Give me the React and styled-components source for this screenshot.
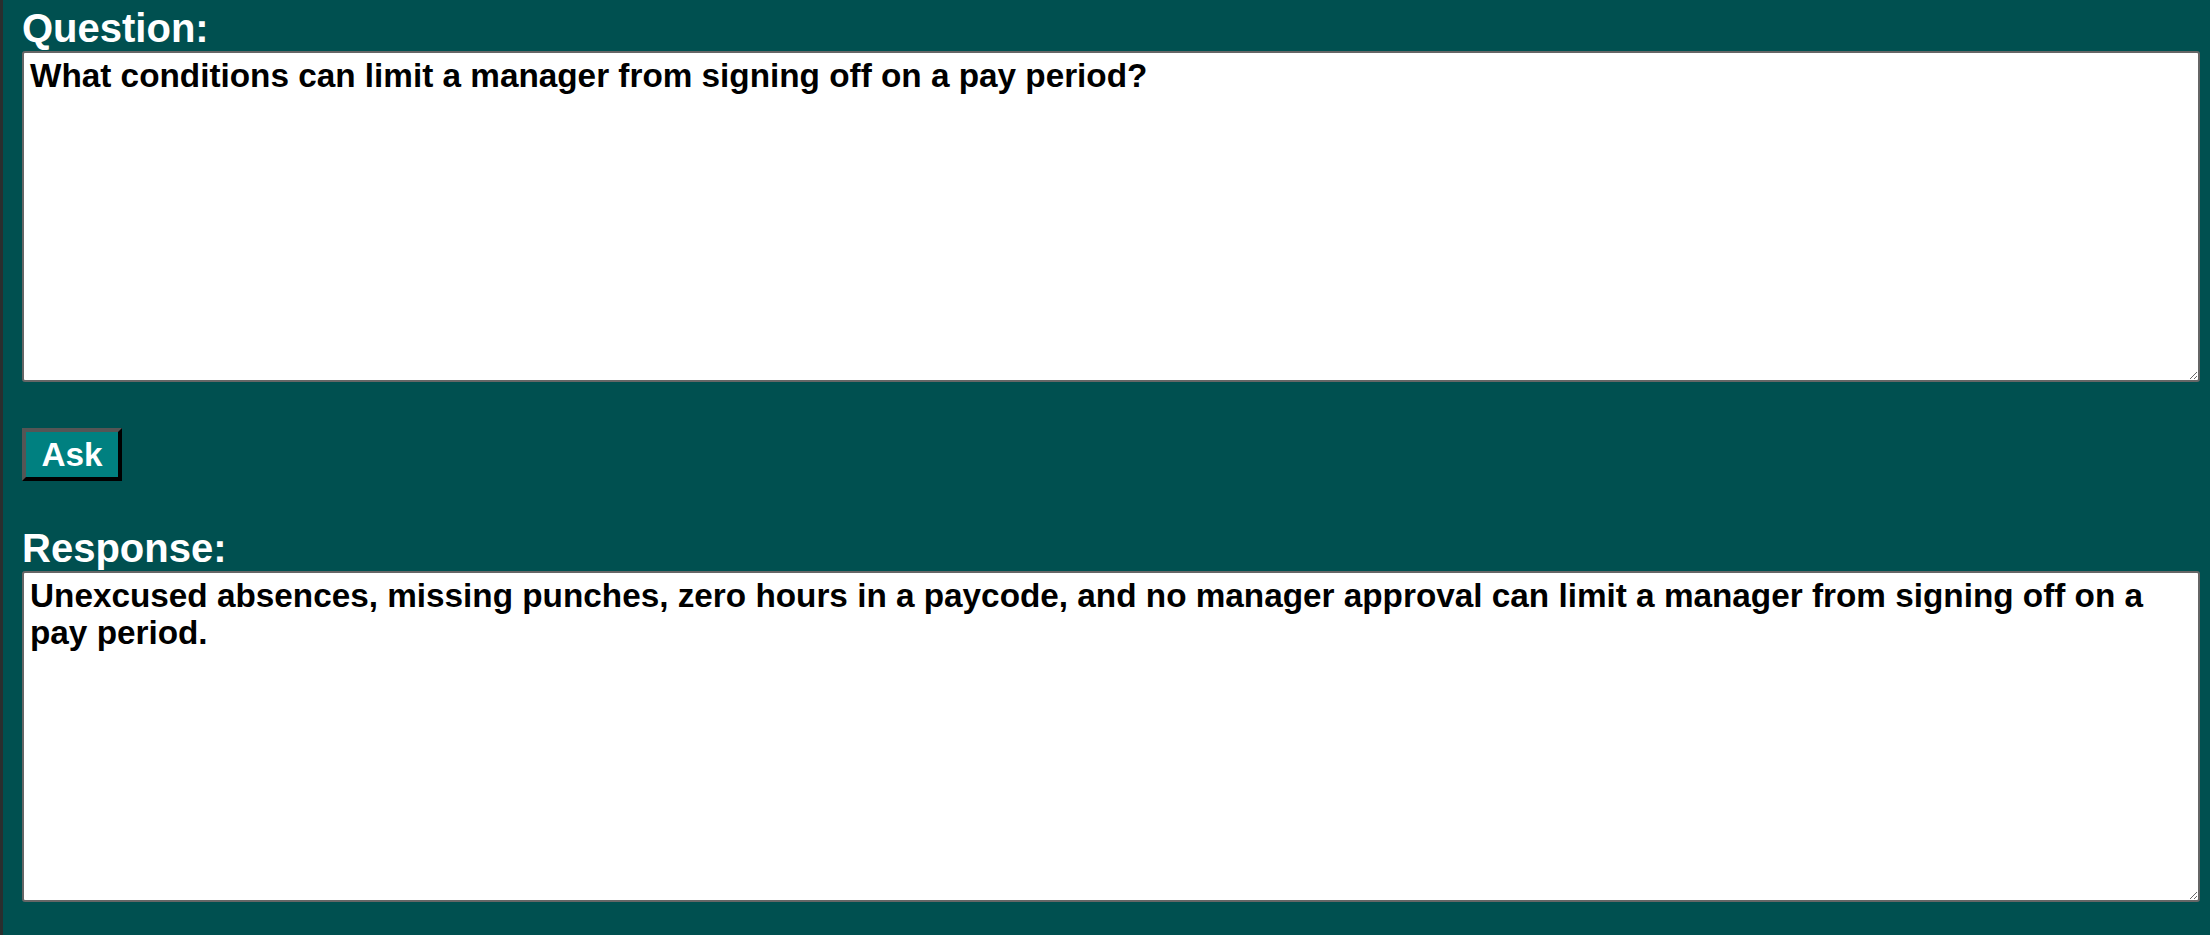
import React, { useState } from "react";
import styled, { createGlobalStyle } from "styled-components";

const GlobalStyle = createGlobalStyle`
    html, body {
        margin: 0;
        padding: 0;
        background-color: #005050;
    }
`;

const Page = styled.div`
    box-sizing: border-box;
    min-height: 100vh;
    border-left: 3px solid #2a2e2e;
    padding: 5px 10px 0 19px;
    font-family: "Liberation Sans", Arial, sans-serif;
`;

const Label = styled.label`
    display: block;
    margin: ${(p) => (p.$spaced ? "44px 0 0" : "0")};
    color: white;
    font-size: 40px;
    font-weight: bold;
    line-height: 46px;
`;

const TextArea = styled.textarea`
    display: block;
    box-sizing: border-box;
    width: 100%;
    height: 331px;
    margin: 0;
    padding: 4px 6px 2px;
    border: 2px solid #666;
    border-radius: 3px;
    background: white;
    color: black;
    font-family: "Liberation Sans", Arial, sans-serif;
    font-size: 33.3px;
    font-weight: bold;
    line-height: 37px;
    resize: vertical;
    outline: none;
`;

const ButtonRow = styled.div`
    display: flex;
    margin-top: 46px;
`;

const AskButton = styled.button`
    box-sizing: border-box;
    width: 100px;
    height: 53px;
    padding: 0;
    border: 4px solid;
    border-color: #555 #000 #000 #555;
    background-color: #008080;
    color: white;
    font-family: "Liberation Sans", Arial, sans-serif;
    font-size: 33.3px;
    font-weight: bold;
    cursor: pointer;
`;

const App = () => {
    const [question, setQuestion] = useState(
        "What conditions can limit a manager from signing off on a pay period?"
    );
    const [response] = useState(
        "Unexcused absences, missing punches, zero hours in a paycode, and no manager approval can limit a manager from signing off on a pay period."
    );

    return (
        <Page>
            <GlobalStyle />
            <Label htmlFor="question">Question:</Label>
            <TextArea
                id="question"
                value={question}
                onChange={(e) => setQuestion(e.target.value)}
            />
            <ButtonRow>
                <AskButton>Ask</AskButton>
            </ButtonRow>
            <Label htmlFor="response" $spaced>
                Response:
            </Label>
            <TextArea id="response" value={response} readOnly />
        </Page>
    );
};

export default App;
